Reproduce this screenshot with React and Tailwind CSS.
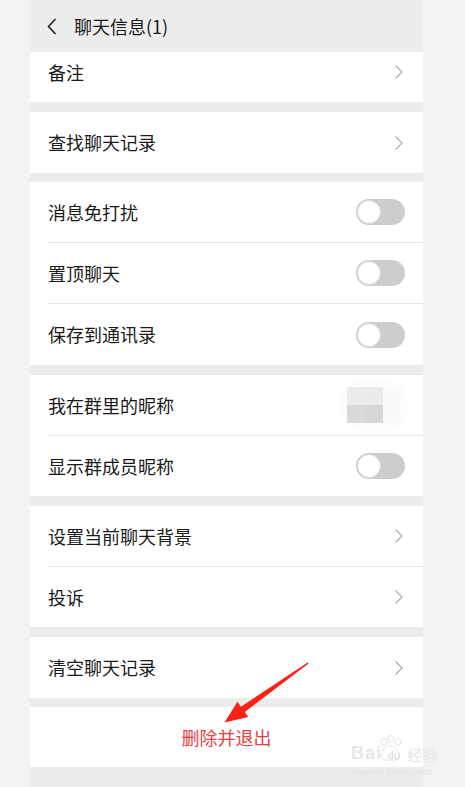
import React from "react";

const Chevron = () => (
  <svg width="10" height="16" viewBox="0 0 10 16" className="shrink-0">
    <polyline points="1.5,1.5 8,8 1.5,14.5" fill="none" stroke="#b3b3b3" strokeWidth="1.4" />
  </svg>
);

const Toggle = () => (
  <div className="w-[49px] h-[26px] rounded-full bg-[#cdcdcd] flex items-center px-[1px] shrink-0">
    <div className="w-[24px] h-[24px] rounded-full bg-white border border-[#d9d9d9]" />
  </div>
);

const Row = ({ label, right, divider, h = "h-[61px]" }) => (
  <div className={`bg-white pl-[18px] ${h}`}>
    <div className={`h-full flex items-center justify-between ${divider ? "border-b border-[#e6e6e6]" : ""}`}>
      <span className="text-[18px] text-[#1a1a1a]">{label}</span>
      {right}
    </div>
  </div>
);

const Chev = () => (
  <div className="pr-[19px] flex items-center">
    <Chevron />
  </div>
);
const Tog = () => (
  <div className="pr-[18px] flex items-center">
    <Toggle />
  </div>
);

const Mosaic = () => (
  <div className="pr-[22px] flex items-center">
    <div className="grid grid-cols-3 rounded-[30px] ring-8 ring-[#fdfdfd] bg-[#fdfdfd]">
      <div className="w-[18px] h-[18px] bg-[#ececec]" />
      <div className="w-[18px] h-[18px] bg-[#ebebeb]" />
      <div className="w-[18px] h-[18px] bg-[#fafafa]" />
      <div className="w-[18px] h-[18px] bg-[#d9d9d9]" />
      <div className="w-[18px] h-[18px] bg-[#d7d7d7]" />
      <div className="w-[18px] h-[18px] bg-[#fafafa]" />
    </div>
  </div>
);

export default function App() {
  return (
    <div className="relative w-full h-[787px] bg-[#f3f3f3] overflow-hidden font-['Noto_Sans_CJK_SC','Noto_Sans',sans-serif]">
      <div className="ml-[30px] w-[393px] bg-[#ececec] flex flex-col">
        <div className="h-[52px] bg-[#ededed] flex items-center pl-[17px]">
          <svg width="10" height="17" viewBox="0 0 10 17">
            <polyline points="8.5,1 1.5,8.5 8.5,16" fill="none" stroke="#1a1a1a" strokeWidth="1.5" />
          </svg>
          <span className="ml-[17px] text-[18px] text-[#1a1a1a]">聊天信息(1)</span>
        </div>

        <div className="bg-white pl-[18px] h-[50px] pb-[10px] flex items-center justify-between">
          <span className="text-[18px] text-[#1a1a1a]">备注</span>
          <Chev />
        </div>

        <div className="h-[10px]" />
        <Row label="查找聊天记录" right={<Chev />} />

        <div className="h-[9px]" />
        <Row label="消息免打扰" right={<Tog />} divider />
        <Row label="置顶聊天" right={<Tog />} divider />
        <Row label="保存到通讯录" right={<Tog />} />

        <div className="h-[10px]" />
        <Row label="我在群里的昵称" right={<Mosaic />} divider />
        <Row label="显示群成员昵称" right={<Tog />} h="h-[60px]" />

        <div className="h-[10px]" />
        <Row label="设置当前聊天背景" right={<Chev />} divider />
        <Row label="投诉" right={<Chev />} h="h-[60px]" />

        <div className="h-[10px]" />
        <Row label="清空聊天记录" right={<Chev />} />

        <div className="h-[9px]" />
        <div className="bg-white h-[60px] flex items-center justify-center">
          <span className="text-[18px] text-[#e64340]">删除并退出</span>
        </div>
        <div className="h-[20px]" />
      </div>

      <svg className="absolute left-0 top-0 pointer-events-none" width="465" height="787">
        <polygon
          points="308.6,663.6 244.8,711.9 248.3,717 224.5,722.4 237.4,701.8 241,706.7 307.6,662.4"
          fill="#ff2116"
        />
        <g fill="none" stroke="#e4e4e4" strokeWidth="1">
          <ellipse cx="384" cy="742" rx="3" ry="3.5" />
          <ellipse cx="391" cy="739" rx="3" ry="3.5" />
          <ellipse cx="398" cy="742" rx="3" ry="3.5" />
          <path d="M381,756 Q383,746 390,746 Q397,746 400,756 Q400,761 390,760 Q380,761 381,756 Z" />
        </g>
      </svg>

      <div className="absolute left-[351px] top-[744px] pointer-events-none font-['Liberation_Sans',sans-serif]">
        <div className="flex items-end leading-none">
          <span className="text-[18px] font-bold text-[#e8e8e8] tracking-[1px]">Bai</span>
          <span className="text-[10px] font-bold text-[#e2e2e2] ml-[6px] mb-[1px]">du</span>
          <span className="text-[15px] text-[#e5e5e5] ml-[7px] font-['Noto_Sans_CJK_SC',sans-serif]">经验</span>
        </div>
        <div className="text-[11px] text-[#e3e3e3] leading-none mt-[4px] font-['Liberation_Serif',serif]">jingyan.baidu.com</div>
      </div>
    </div>
  );
}
